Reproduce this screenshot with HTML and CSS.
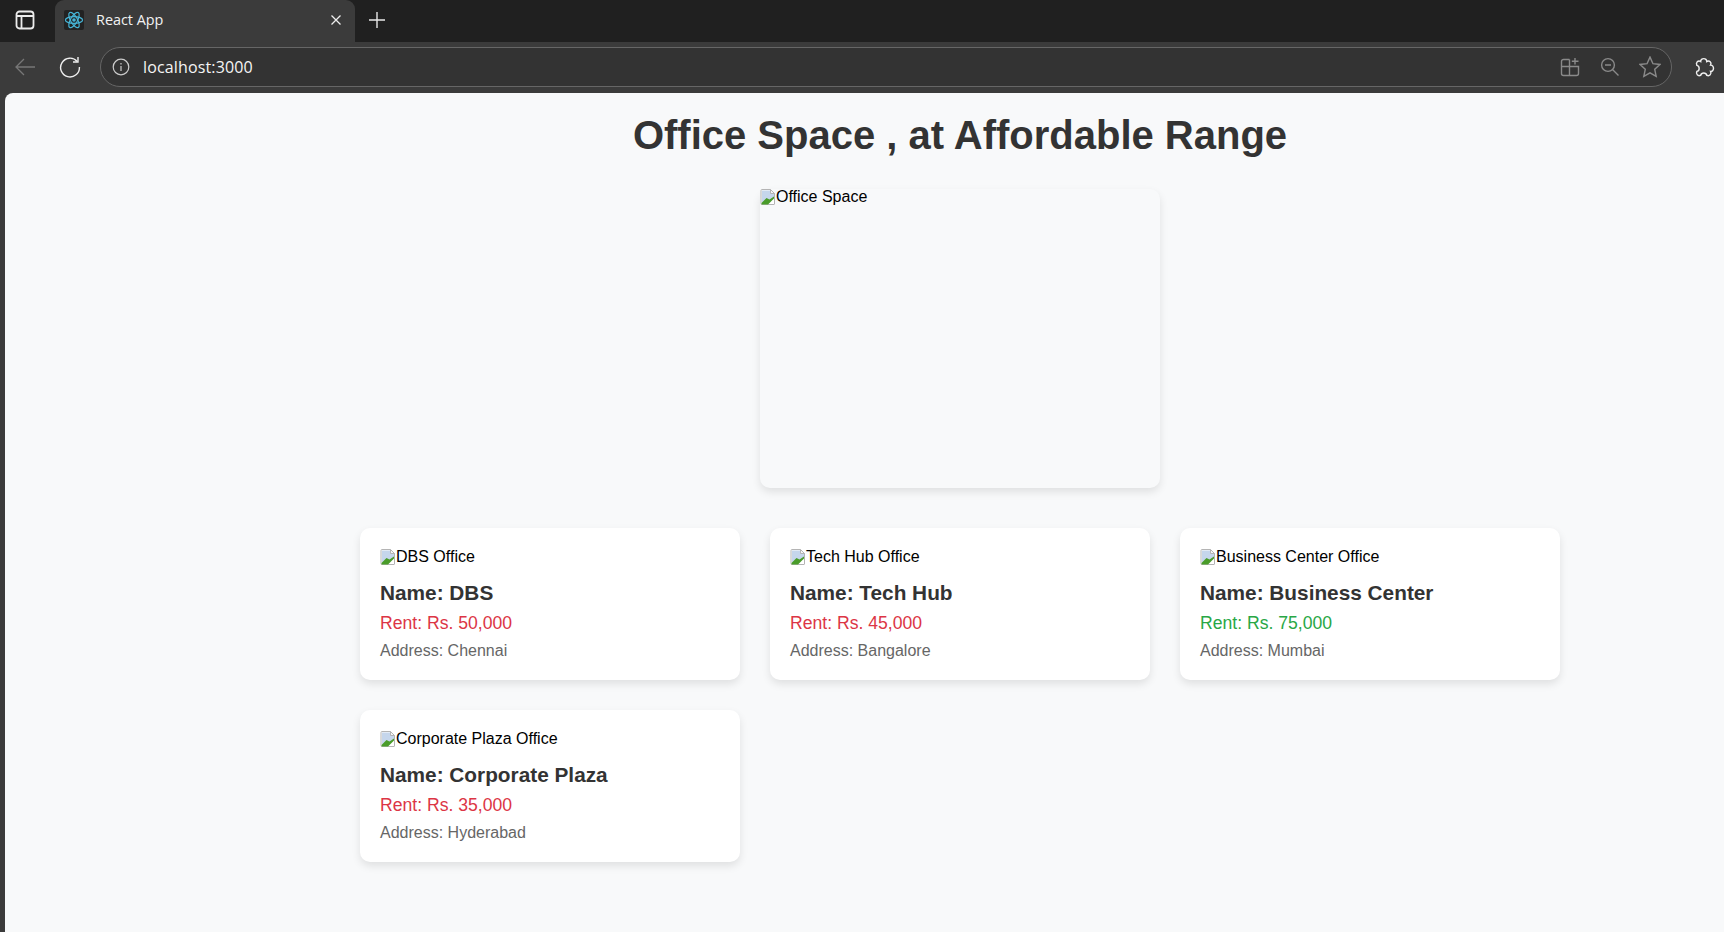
FILE: index.html
```html
<!DOCTYPE html>
<html lang="en">
<head>
  <meta charset="UTF-8">
  <title>React App</title>
  <link rel="stylesheet" href="styles.css">
</head>
<body>
  <svg class="defs" width="0" height="0">
    <symbol id="broken-img" viewBox="0 0 16 16">
      <path d="M2 .5h8.500l4 4v10.500a.5.500 0 0 1-.5.500H2a1 1 0 0 1-1-1V1.500a1 1 0 0 1 1-1z" fill="#fff" stroke="#b4b4b4"/>
      <path d="M2 1.500h8.500l3.500 3.500v4L3 15H2z" fill="#c5d6ec"/>
      <path d="M10.500.5v4h4z" fill="#f4f4f4" stroke="#b4b4b4"/>
      <path d="M1.500 15.500V14L6.500 9l3 1.500L14 7.500v2l-6 6z" fill="#4a9c2a"/>
    </symbol>
  </svg>

  <!-- Browser chrome -->
  <div class="tabstrip">
    <button class="side-btn">
      <svg width="20" height="20" viewBox="0 0 20 20" fill="none" stroke="#ececec" stroke-width="1.800"><rect x="1.500" y="1.500" width="17" height="17" rx="3"/><path d="M1.500 6h17M6.500 6v12.500"/></svg>
    </button>
    <div class="tab">
      <span class="favicon">
        <svg width="20" height="20" viewBox="0 0 20 20" fill="none" stroke="#46b4d6" stroke-width="1.200"><circle cx="10" cy="10" r="1.800" fill="#46b4d6" stroke="none"/><ellipse cx="10" cy="10" rx="8.600" ry="3.400"/><ellipse cx="10" cy="10" rx="8.600" ry="3.400" transform="rotate(60 10 10)"/><ellipse cx="10" cy="10" rx="8.600" ry="3.400" transform="rotate(120 10 10)"/></svg>
      </span>
      <span class="tab-title">React App</span>
      <svg class="tab-close" width="12" height="12" viewBox="0 0 12 12" stroke="#eee" stroke-width="1.300"><path d="M1.500 1.500l9 9M10.500 1.500l-9 9"/></svg>
    </div>
    <svg class="new-tab" width="18" height="18" viewBox="0 0 18 18" stroke="#e8e8e8" stroke-width="1.400"><path d="M9 1v16M1 9h16"/></svg>
  </div>

  <div class="toolbar">
    <svg class="nav-icon" width="22" height="22" viewBox="0 0 22 22" fill="none" stroke="#777" stroke-width="1.300"><path d="M21 11H2M10 3l-8 8 8 8"/></svg>
    <svg class="nav-icon" width="22" height="22" viewBox="0 0 22 22" fill="none" stroke="#eee" stroke-width="1.400"><path d="M18.200 5.500A9.400 9.400 0 1 0 20.400 11"/><path d="M19 1v5h-5"/></svg>
    <div class="addressbar">
      <svg width="18" height="18" viewBox="0 0 18 18" fill="none" stroke="#ccc" stroke-width="1.200"><circle cx="9" cy="9" r="7.800"/><path d="M9 8v5M9 5v1.400"/></svg>
      <span class="url">localhost:3000</span>
      <div class="addr-actions">
        <svg width="20" height="20" viewBox="0 0 20 20" fill="none" stroke="#8a8a8a" stroke-width="1.400"><path d="M9.500 2.500H3.500a2 2 0 0 0-2 2v12a2 2 0 0 0 2 2h13a2 2 0 0 0 2-2v-7H1.500M9.500 2.500v16M15 1v6.500M11.800 4.200h6.700"/></svg>
        <svg width="20" height="20" viewBox="0 0 20 20" fill="none" stroke="#8a8a8a" stroke-width="1.400"><circle cx="8" cy="8" r="6.400"/><path d="M5 8h6M12.500 12.500l6 6"/></svg>
        <svg width="22" height="22" viewBox="1 1 20 20" fill="none" stroke="#8a8a8a" stroke-width="1.300"><path d="M11 2l2.700 6 6.300.7-4.700 4.400 1.300 6.400L11 16.300l-5.600 3.200 1.300-6.400L2 8.700 8.300 8z"/></svg>
      </div>
    </div>
    <svg class="ext-icon" width="22" height="22" viewBox="1 0 20 20" fill="none" stroke="#eee" stroke-width="1.300"><path d="M8 5c-.2-3.500 5.700-3.500 5.500 0 2.500-1.200 4.700.8 3.500 3.300 3.500-.1 3.500 5.900 0 5.700 1.200 2.500-1 4.700-3.500 3.500-.6-2.800-4.900-2.800-5.500 0-2.500 1.200-4.700-1-3.500-3.500 2.800-.6 2.800-4.900 0-5.500C3.300 5.800 5.500 3.800 8 5z"/></svg>
  </div>

  <!-- Page -->
  <div class="viewport">
    <div class="app">
      <h1 class="title">Office Space , at Affordable Range</h1>
      <div class="hero">
        <span class="broken"><svg class="broken-icon"><use href="#broken-img"/></svg>Office Space</span>
      </div>
      <div class="office-grid">
        <div class="office-card">
          <span class="broken"><svg class="broken-icon"><use href="#broken-img"/></svg>DBS Office</span>
          <h2 class="office-name">Name: DBS</h2>
          <p class="rent rent-high">Rent: Rs. 50,000</p>
          <p class="address">Address: Chennai</p>
        </div>
        <div class="office-card">
          <span class="broken"><svg class="broken-icon"><use href="#broken-img"/></svg>Tech Hub Office</span>
          <h2 class="office-name">Name: Tech Hub</h2>
          <p class="rent rent-high">Rent: Rs. 45,000</p>
          <p class="address">Address: Bangalore</p>
        </div>
        <div class="office-card">
          <span class="broken"><svg class="broken-icon"><use href="#broken-img"/></svg>Business Center Office</span>
          <h2 class="office-name">Name: Business Center</h2>
          <p class="rent rent-low">Rent: Rs. 75,000</p>
          <p class="address">Address: Mumbai</p>
        </div>
        <div class="office-card">
          <span class="broken"><svg class="broken-icon"><use href="#broken-img"/></svg>Corporate Plaza Office</span>
          <h2 class="office-name">Name: Corporate Plaza</h2>
          <p class="rent rent-high">Rent: Rs. 35,000</p>
          <p class="address">Address: Hyderabad</p>
        </div>
      </div>
    </div>
  </div>
</body>
</html>
```

FILE: styles.css
```css
body {
  margin: 0;
  height: 932px;
  overflow: hidden;
  background: #3b3b3b;
  font-family: 'Liberation Sans', Arial, sans-serif;
}
.defs {
  display: block;
  height: 0;
}

/* Browser chrome */
.tabstrip {
  display: flex;
  align-items: flex-start;
  height: 42px;
  background: #202020;
}
.side-btn {
  display: flex;
  align-items: center;
  justify-content: center;
  width: 50px;
  height: 40px;
  padding: 0;
  border: none;
  background: none;
}
.tab {
  display: flex;
  align-items: center;
  width: 300px;
  height: 42px;
  margin-left: 5px;
  padding: 0 13px 3px 9px;
  box-sizing: border-box;
  background: #3b3b3b;
  border-radius: 9px 9px 0 0;
  color: #f2f2f2;
}
.favicon {
  display: flex;
  align-items: center;
  justify-content: center;
  width: 20px;
  height: 20px;
  background: #222;
  border-radius: 2px;
}
.tab-title {
  flex: 1;
  margin-left: 12px;
  font: 14.4px 'Open Sans', sans-serif;
}
.new-tab {
  margin: 11px 0 0 13px;
}
.toolbar {
  display: flex;
  align-items: center;
  height: 51px;
  padding: 0 0 1px 14px;
  box-sizing: border-box;
  background: #3b3b3b;
}
.nav-icon {
  flex: none;
  margin-right: 23px;
}
.nav-icon + .nav-icon {
  margin-right: 19px;
}
.addressbar {
  display: flex;
  align-items: center;
  width: 1572px;
  height: 40px;
  padding: 0 10px 0 11px;
  box-sizing: border-box;
  border: 1px solid #666;
  border-radius: 20px;
  background: #333;
}
.url {
  flex: 1;
  margin-left: 13px;
  font: 16px 'Open Sans', sans-serif;
  letter-spacing: 0.15px;
  color: #f5f5f5;
}
.addr-actions {
  display: flex;
  align-items: center;
  gap: 20px;
}
.addr-actions svg:last-child {
  margin-left: -1px;
}
.ext-icon {
  flex: none;
  margin-left: 21px;
}

/* Page */
.viewport {
  height: 839px;
  margin-left: 5px;
  overflow: hidden;
  background: #f8f9fa;
  border-radius: 8px 0 0 0;
}
.app {
  width: 1910px;
}
.title {
  margin: 0;
  padding-top: 19px;
  text-align: center;
  font-size: 40px;
  line-height: 46px;
  color: #333;
}
.hero {
  width: 400px;
  height: 299px;
  margin: 31px auto 40px;
  border-radius: 10px;
  box-shadow: 0 4px 8px rgba(0, 0, 0, 0.1);
}
.hero .broken {
  line-height: 16px;
}
.broken {
  display: block;
  font-size: 16px;
  line-height: 18px;
  color: #000;
}
.broken-icon {
  width: 16px;
  height: 16px;
  vertical-align: -3px;
}
.office-grid {
  display: grid;
  grid-template-columns: repeat(3, 380px);
  gap: 30px;
  justify-content: center;
}
.office-card {
  height: 152px;
  padding: 20px;
  box-sizing: border-box;
  background: #fff;
  border-radius: 10px;
  box-shadow: 0 4px 8px rgba(0, 0, 0, 0.1);
}
.office-name {
  margin: 15px 0 0;
  font-size: 20.8px;
  line-height: 24px;
  color: #333;
}
.rent {
  margin: 8px 0 0;
  font-size: 17.6px;
  line-height: 20px;
}
.rent-high {
  color: #dc3545;
}
.rent-low {
  color: #28a745;
}
.address {
  margin: 9px 0 0;
  font-size: 16px;
  line-height: 18px;
  color: #666;
}
```
